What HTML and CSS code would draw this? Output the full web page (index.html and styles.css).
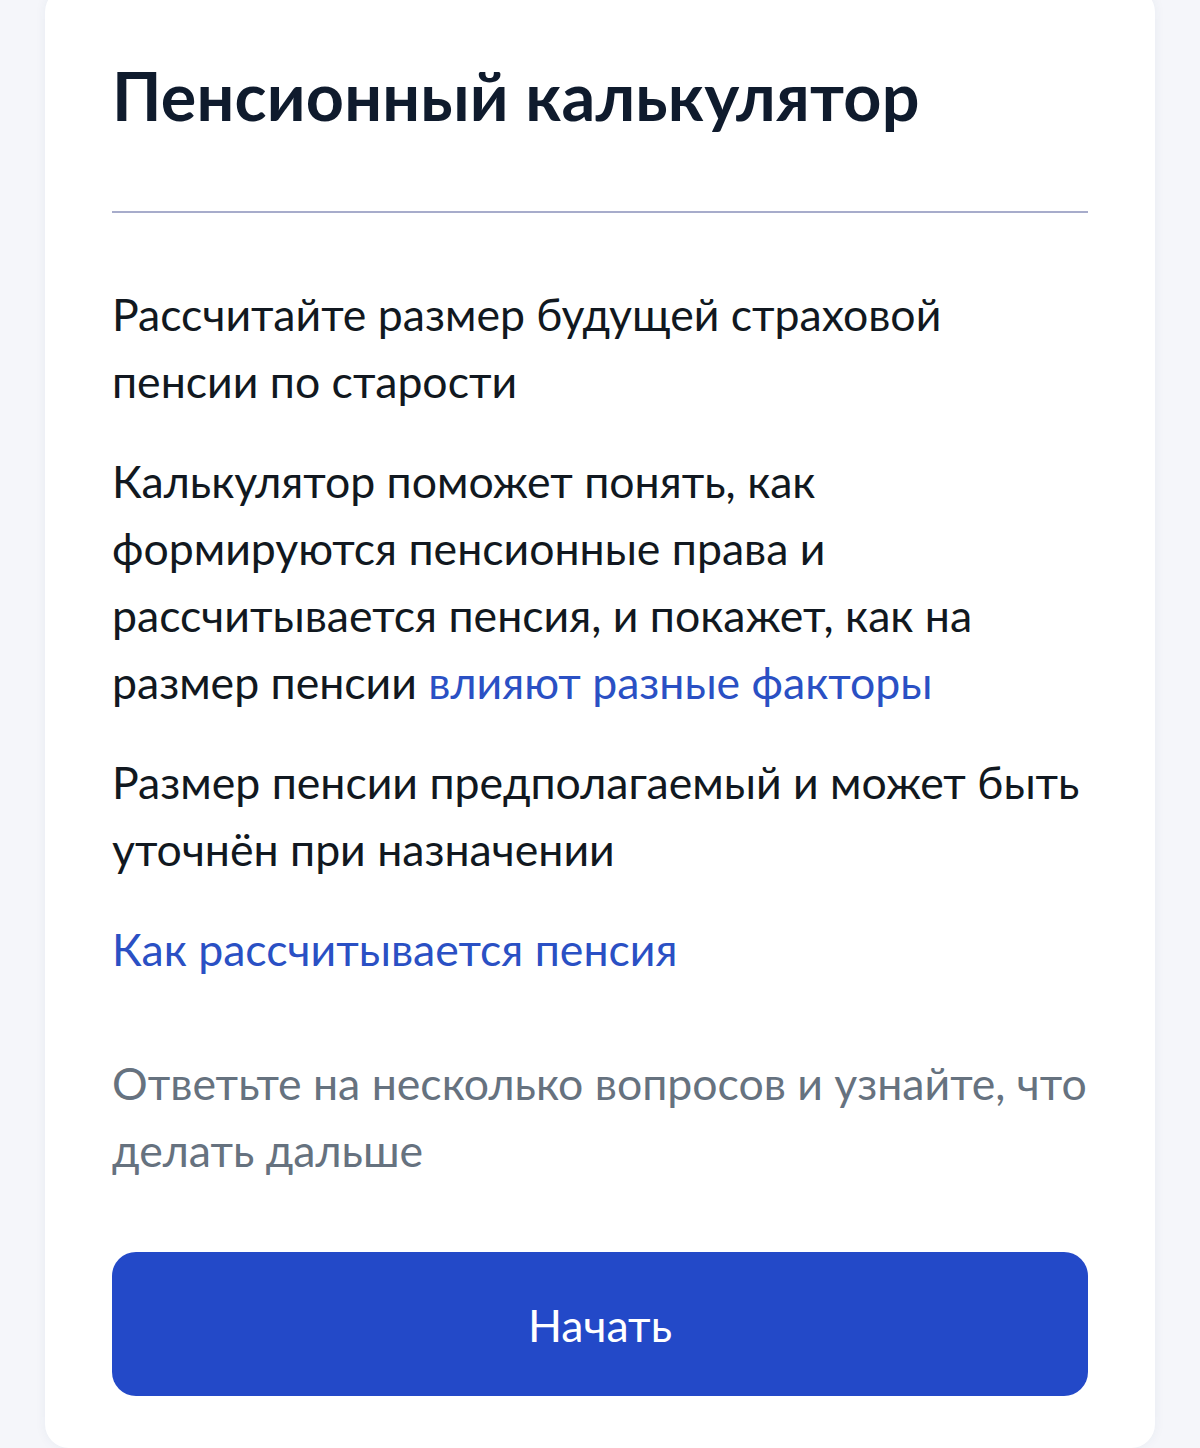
FILE: index.html
```html
<!DOCTYPE html>
<html lang="ru">
<head>
  <meta charset="UTF-8" />
  <title>Пенсионный калькулятор</title>
  <link rel="stylesheet" href="styles.css">
</head>
<body>

  <div class="calc-card">
    <h1 class="calc-title">Пенсионный калькулятор</h1>
    <div class="calc-divider"></div>

    <p class="calc-text">Рассчитайте размер будущей страховой пенсии по старости</p>
    <p class="calc-text">Калькулятор поможет понять, как формируются пенсионные права и рассчитывается пенсия, и покажет, как на размер пенсии <a class="calc-link" href="#">влияют разные факторы</a></p>
    <p class="calc-text">Размер пенсии предполагаемый и может быть уточнён при назначении</p>
    <p class="calc-text"><a class="calc-link" href="#">Как рассчитывается пенсия</a></p>

    <p class="calc-hint">Ответьте на несколько вопросов и узнайте, что делать дальше</p>

    <button class="btn-start">Начать</button>
  </div>

</body>
</html>
```

FILE: styles.css
```css
/* страница */
body {
  margin: 0;
  height: 1448px;
  overflow: hidden;
  background: #f5f6fa;
  font-family: Lato, "Noto Sans", sans-serif;
  color: #0b1f33;
}

/* карточка */
.calc-card {
  margin: -12px 45px 0;
  padding: 67px 67px 52px;
  background: #fff;
  border-radius: 24px;
  box-shadow: 0 0 12px rgba(40, 60, 120, 0.06);
}

.calc-title {
  margin: 0;
  font-size: 66.5px;
  line-height: 80px;
  font-weight: 700;
  color: #0f1b2d;
  letter-spacing: 0.2px;
}

.calc-divider {
  height: 2px;
  margin: 76px 0 67px;
  background: #a7accb;
}

/* тексты */
.calc-text {
  margin: 0 0 33px;
  font-size: 44.6px;
  line-height: 67px;
  color: #111820;
}

.calc-link {
  color: #2a50c4;
  text-decoration: none;
}

.calc-hint {
  margin: 67px 0 69px;
  font-size: 44.6px;
  line-height: 67px;
  color: #66727f;
}

/* кнопка */
.btn-start {
  display: flex;
  align-items: center;
  justify-content: center;
  width: 100%;
  height: 144px;
  padding: 0;
  border: none;
  border-radius: 24px;
  background: #2349c8;
  color: #fff;
  font-family: inherit;
  font-size: 44.6px;
  cursor: pointer;
}
```
